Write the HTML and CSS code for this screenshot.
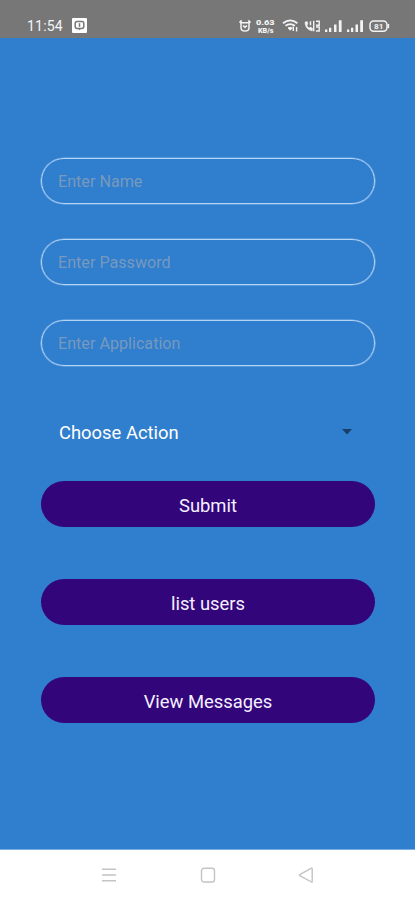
FILE: index.html
```html
<!DOCTYPE html>
<html lang="en">
<head>
<meta charset="utf-8">
<meta name="viewport" content="width=device-width, initial-scale=1">
<title>User form</title>
<link rel="stylesheet" href="styles.css">
</head>
<body>
<div class="screen">
  <header class="status">
    <span class="clock">11:54</span>
    <svg class="notice" width="15" height="15" viewBox="0 0 15 15"><rect width="15" height="15" rx="1" fill="#fff"/><rect x="3.2" y="3.6" width="8.6" height="6.8" rx="1.8" fill="none" stroke="#777" stroke-width="1.5"/><path d="M6 10.4h3L7.5 12.3z" fill="#777"/><path d="M7.5 5.2v3.6" stroke="#777" stroke-width="1.5"/></svg>
    <svg class="indicators" width="152" height="18" viewBox="238 17 152 18">
      <g fill="none" stroke="#f3f3f3" stroke-width="1.5">
        <path d="M241 22.7h8v4.8q0 3.6-4 3.6t-4-3.6zM239.5 22.6l2.2-2.2M250.5 22.6l-2.2-2.2M243 25.7l2 1.5 2-1.5"/>
        <path d="M283 23.2q7.2-5.6 14.4 0M285.5 25.8q4.7-3.4 9.4 0" stroke-width="1.8"/>
        <path d="M288 28q2.2-1.5 4.3 0l-2.1 2.2z" fill="#f3f3f3" stroke-width="1"/>
        <path d="M293.3 31v-4.4M296.6 27v4.6" stroke-width="1.4"/>
        <path d="M305 22.1c.1 4.8 2.7 8 7.3 8.8l.3-2.7-2.3-1.1-1.2 1c-1.2-.8-1.8-1.8-2.2-3l1.1-1.1-.8-2.4z" fill="#f3f3f3" stroke-width=".5"/>
        <path d="M310.5 21.2v4M313.7 20.7v10.6M316 21.2h3.2v4H316M316 27h3.2v4H316" stroke-width="1.4"/>
        <rect x="370" y="21" width="17" height="10.2" rx="3.6"/><path d="M388.4 24v4.2"/>
      </g>
      <g fill="#f3f3f3">
        <path d="M325 29.5h2.3V32H325zM329 27.7h2.3V32H329zM334 24.5h2.5V32H334zM338.8 20.2h2.8V32h-2.8zM347 29.5h2.3V32H347zM351 27.7h2.3V32H351zM355.5 24.5h2.5V32h-2.5zM360.2 20.2h2.8V32h-2.8z"/>
        <text class="rate" x="256" y="25.1" textLength="18.5" lengthAdjust="spacingAndGlyphs">0.63</text>
        <text class="rate" x="258" y="32.6" textLength="15.5" lengthAdjust="spacingAndGlyphs">KB/s</text>
        <text class="charge" x="374" y="29.3" textLength="9.5" lengthAdjust="spacingAndGlyphs">81</text>
      </g>
    </svg>
  </header>
  <main class="form">
    <input class="field" type="text" placeholder="Enter Name" aria-label="Name">
    <input class="field" type="text" placeholder="Enter Password" aria-label="Password">
    <input class="field" type="text" placeholder="Enter Application" aria-label="Application">
    <div class="select"><span>Choose Action</span><svg width="10" height="6" viewBox="0 0 10 6"><path d="M0 0h10L5 5.5z" fill="#173f68"/></svg></div>
    <button class="button">Submit</button>
    <button class="button">list users</button>
    <button class="button">View Messages</button>
  </main>
  <nav class="nav">
    <svg width="16" height="16" viewBox="0 0 16 16"><path d="M1 2.3h14M1 8h14M1 13.8h14"/></svg>
    <svg width="16" height="16" viewBox="0 0 16 16"><rect x="1.5" y="1.2" width="13" height="13.8" rx="2.5"/></svg>
    <svg width="16" height="16" viewBox="0 0 16 16"><path d="M14.2 1.5v13.2q0 .8-.7.3L1.7 8.6q-.8-.5 0-1L13.5 1.2q.7-.4.7.3z"/></svg>
  </nav>
</div>
</body>
</html>
```
FILE: styles.css
```css
* { box-sizing: border-box; }
body { margin: 0; font-family: Roboto, "Liberation Sans", sans-serif; }
.screen {
  display: flex;
  flex-direction: column;
  height: 900px;
  background: #307ece;
}
.status {
  display: flex;
  align-items: center;
  height: 38px;
  padding: 14px 25px 0 27px;
  background: #777;
  color: #f5f5f5;
}
.clock { width: 45px; font-size: 14px; line-height: 18px; letter-spacing: .2px; }
.notice { margin-top: -1px; }
.indicators { margin-left: auto; }
.rate { font-size: 6.4px; font-weight: 900; }
.charge { font-size: 8px; font-weight: 700; }
.form {
  display: flex;
  flex: 1;
  flex-direction: column;
  padding: 120px 40px 0 41px;
}
.field {
  width: 100%;
  height: 46px;
  flex: none;
  margin: 0 0 34.8px;
  padding: 1px 16px 0;
  border: 1px solid #b4d4f5;
  border-radius: 23px;
  outline: 0;
  background: transparent;
  box-shadow: 0 0 0 .6px #7fb1e5;
  color: #fff;
  font: 16.15px Roboto, sans-serif;
}
.field::placeholder { color: #7799bd; opacity: 1; }
.select {
  display: flex;
  align-items: center;
  justify-content: space-between;
  height: 46px;
  margin: 9px 23px 26px 18px;
  color: #fff;
  font-size: 18.4px;
}
.button {
  height: 46px;
  flex: none;
  margin: 0 0 52px;
  padding: 3px 0 0;
  border: 0;
  border-radius: 23px;
  background: #32057b;
  color: #f5f0ff;
  font: 18.4px Roboto, sans-serif;
}
.nav {
  display: flex;
  align-items: center;
  justify-content: space-between;
  height: 51px;
  padding: 0 101px;
  border-top: 1px solid #78aee4;
  background: #fff;
}
.nav svg { fill: none; stroke: #c4c4c4; stroke-width: 1.4; }
```
